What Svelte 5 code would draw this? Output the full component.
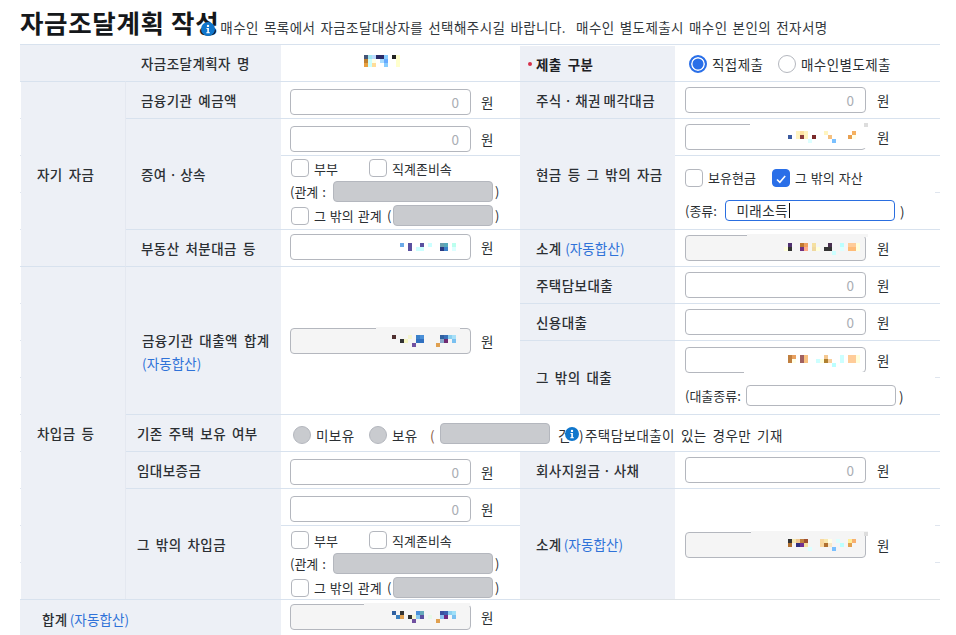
<script>
  function mk(ox, oy, cover, rows) {
    const cells = [];
    for (const [y, r] of rows) {
      for (let i = 0; i < r.length; i += 2) cells.push({ l: r[i] - ox, t: y - oy, c: r[i + 1] });
    }
    const c = cover ? { l: cover[0] - ox, t: cover[1] - oy, w: cover[2], h: cover[3], c: cover[4] } : null;
    return { cover: c, cells };
  }
  const name = mk(364, 55, null, [
    [55, [364,'#445577',368,'#a0e4f0',372,'#bcdcff',376,'#2a2a66',380,'#2a2a66',384,'#88ccff',392,'#222222',396,'#ffffcc']],
    [59, [364,'#c08030',368,'#ccffff',372,'#ffffe8',380,'#aaddff',384,'#66aaff',396,'#ffffcc']],
    [63, [364,'#e8a040',368,'#ccffff',372,'#ffdd99',384,'#88ccff',396,'#ffffcc']]
  ]);
  const stock = mk(685, 124, [750, 122, 118, 26, '#fff'], [
    [123, [864,'#dddddd']],
    [131, [796,'#fff3c0',800,'#fde0a0',804,'#fff3c0',824,'#fff5c0',852,'#f5b060']],
    [135, [788,'#3a5aa0',796,'#fff3c0',800,'#8a3a3a',804,'#fff3c0',812,'#7a2a2a',828,'#f5c080',848,'#e8a050',852,'#ffffe8']],
    [139, [808,'#ddffff',832,'#7ac0ff']]
  ]);
  const land = mk(290, 234, null, [
    [243, [400,'#6aaae8',408,'#5a50a0',420,'#5a50a0',428,'#ccffff',440,'#6aa0b0',444,'#55aabb',452,'#bbffee']],
    [247, [408,'#5a50a0',416,'#ccffff',420,'#ccffff',440,'#2a3a80',444,'#3a80c8',452,'#ddffff']]
  ]);
  const loan = mk(290, 328, [376, 327, 84, 3, '#f5f5f5'], [
    [335, [392,'#503030',408,'#f5f5d0',416,'#3a80c8',420,'#4a90d8',440,'#3060a0',444,'#3a70b8',448,'#8ad0f0',452,'#a8e0f8']],
    [339, [400,'#333333',404,'#f5f5c0',416,'#3070c0',420,'#3070c0',440,'#88aacc',444,'#702a70',452,'#7ac0f0']],
    [343, [412,'#7050a0',436,'#e0a050']]
  ]);
  const total = mk(290, 604, [364, 603, 106, 3, '#f5f5f5'], [
    [611, [392,'#3060a0',400,'#333333',416,'#4a90d8',420,'#66aabb',440,'#3a50a0',444,'#3a60b0',448,'#8ad0f0',452,'#a0e0f8']],
    [615, [396,'#3a80c0',400,'#e0a050',408,'#333333',412,'#f5f5d0',416,'#8ac8f0',420,'#5a50a0',428,'#e8f8e8',440,'#8ac0f0',444,'#702a80',452,'#7ac0f0']],
    [619, [412,'#7050a0',436,'#e0a050']]
  ]);
  const sub1 = mk(685, 235, [747, 234, 121, 3, '#f5f5f5'], [
    [243, [788,'#503070',800,'#c07830',804,'#f0a060',812,'#f5e0a0',828,'#4a3050',840,'#bbffff',848,'#ffcc99',852,'#ffcc99',856,'#ffffdd']],
    [247, [784,'#ffffdd',788,'#333333',800,'#703080',804,'#ffaa88',812,'#f0d8a0',816,'#ffffdd',824,'#333333',828,'#333333',840,'#ddffff',848,'#ffbb77',852,'#ffbb77',856,'#ffffdd']],
    [251, [832,'#ccffff']]
  ]);
  const other = mk(685, 347, [744, 372, 121, 3, '#fff'], [
    [355, [788,'#c08040',792,'#e8a060',800,'#a06060',804,'#f8c080',824,'#f5c890',840,'#ccffff',848,'#ffcc99',852,'#ffcc99',856,'#ffffdd']],
    [359, [788,'#c08040',792,'#ffffe8',800,'#a06060',804,'#f8c080',816,'#ccffff',820,'#ffffdd',824,'#b08030',828,'#f8d0a0',840,'#ccffff',848,'#ffcc99',852,'#ffcc99',856,'#ffffdd']],
    [363, [832,'#bbffff']]
  ]);
  const sub2 = mk(685, 532, [751, 531, 117, 3, '#f5f5f5'], [
    [532, [864,'#dddddd']],
    [539, [788,'#333333',792,'#f5e8b0',796,'#f0c890',800,'#c08040',804,'#a05030',820,'#f8d8a0',824,'#f8e8b0',828,'#ffffe8',836,'#ddffff',848,'#ffee99',852,'#f8b070']],
    [543, [788,'#b07030',796,'#303080',800,'#703090',804,'#f5e0a0',820,'#f8d8a0',824,'#b07030',828,'#f8e8c8',840,'#bbffff',848,'#e0a050']],
    [547, [808,'#ddffff',832,'#7ac0ff']]
  ]);
</script>

{#snippet mosaic(m)}
  {#if m.cover}
    <i class="cover" style="left:{m.cover.l}px;top:{m.cover.t}px;width:{m.cover.w}px;height:{m.cover.h}px;background:{m.cover.c}"></i>
  {/if}
  {#each m.cells as b}
    <i class="px" style="left:{b.l}px;top:{b.t}px;background:{b.c}"></i>
  {/each}
{/snippet}

{#snippet field(m, ro)}
  <div class="fld" class:ro>
    {#if m}{@render mosaic(m)}{:else}<span class="zero">0</span>{/if}
  </div>
  <span class="won">원</span>
{/snippet}

{#snippet info()}
  <svg class="info" viewBox="0 0 14 14" width="14" height="14" aria-hidden="true">
    <circle cx="7" cy="7" r="7" fill="#0f76cc" />
    <circle cx="7" cy="3.9" r="1.2" fill="#fff" />
    <path d="M5.5 6h2.4v4.2h1V11.2H5.3v-1h1V7H5.5z" fill="#fff" />
  </svg>
{/snippet}

{#snippet rel(pad)}
  <div class="rows" class:pad>
    <div class="line chk plain">
      <span class="box"></span><span class="l1">부부</span>
      <span class="box"></span><span>직계존비속</span>
    </div>
    <div class="line plain">
      <span class="rl">(관계 :</span><span class="gray g160"></span><span class="cp">)</span>
    </div>
    <div class="line plain">
      <span class="box b0"></span><span class="ol">그 밖의 관계</span><span class="op">(</span><span class="gray g100"></span><span class="cp">)</span>
    </div>
  </div>
{/snippet}

<div class="page">
  <header class="head">
    <h1>자금조달계획 작성</h1>
    {@render info()}
    <p>매수인 목록에서 자금조달대상자를 선택해주시길 바랍니다.&nbsp; 매수인 별도제출시 매수인 본인의 전자서명</p>
  </header>

  <div class="table">
    <div class="c lab first" style="grid-area:1/1/2/3">자금조달계획자 명</div>
    <div class="c val" style="grid-area:1/3/2/4"><div class="name">{@render mosaic(name)}</div></div>
    <div class="c lab rl-lab strong" style="grid-area:1/4/2/5"><i class="dot"></i>제출 구분</div>
    <div class="c val radios" style="grid-area:1/5/2/6">
      <span class="radio on"></span><span class="r1">직접제출</span>
      <span class="radio"></span><span>매수인별도제출</span>
    </div>

    <div class="c a" style="grid-area:2/1/7/2">자기 자금</div>
    <div class="c lab" style="grid-area:2/2/3/3">금융기관 예금액</div>
    <div class="c val low" style="grid-area:2/3/3/4">{@render field()}</div>
    <div class="c lab rl-lab tight" style="grid-area:2/4/3/5">주식 · 채권 매각대금</div>
    <div class="c val rv" style="grid-area:2/5/3/6">{@render field()}</div>

    <div class="c lab tight" style="grid-area:3/2/6/3">증여 · 상속</div>
    <div class="c val low" style="grid-area:3/3/4/4">{@render field()}</div>
    <div class="c val top" style="grid-area:4/3/6/4">{@render rel(false)}</div>
    <div class="c lab rl-lab" style="grid-area:3/4/6/5">현금 등 그 밖의 자금</div>
    <div class="c val rv" style="grid-area:3/5/4/6">{@render field(stock)}</div>
    <div class="c val rv top tick1 cash" style="grid-area:4/5/6/6">
      <div class="line plain">
        <span class="box"></span><span class="l2">보유현금</span>
        <span class="box checked">
          <svg viewBox="0 0 18 18" width="18" height="18" aria-hidden="true"><path d="M4.5 9.5l3.2 3.2 6-7" fill="none" stroke="#fff" stroke-width="1.8" /></svg>
        </span><span>그 밖의 자산</span>
      </div>
      <div class="line kind">
        <span class="kl plain">(종류:</span><span class="typed">미래소득<i class="caret"></i></span><span class="kr">)</span>
      </div>
    </div>

    <div class="c lab" style="grid-area:6/2/7/3">부동산 처분대금 등</div>
    <div class="c val up" style="grid-area:6/3/7/4">{@render field(land)}</div>
    <div class="c lab rl-lab nosp" style="grid-area:6/4/7/5"><span>소계 <span class="auto">(자동합산)</span></span></div>
    <div class="c val rv" style="grid-area:6/5/7/6">{@render field(sub1, true)}</div>

    <div class="c a" style="grid-area:7/1/16/2">차입금 등</div>
    <div class="c lab loan" style="grid-area:7/2/11/3">
      <div>금융기관 대출액 합계<br /><span class="auto">(자동합산)</span></div>
    </div>
    <div class="c val" style="grid-area:7/3/11/4">{@render field(loan, true)}</div>
    <div class="c lab rl-lab" style="grid-area:7/4/8/5">주택담보대출</div>
    <div class="c val rv" style="grid-area:7/5/8/6">{@render field()}</div>
    <div class="c lab rl-lab" style="grid-area:8/4/9/5">신용대출</div>
    <div class="c val rv" style="grid-area:8/5/9/6">{@render field()}</div>
    <div class="c lab rl-lab" style="grid-area:9/4/11/5">그 밖의 대출</div>
    <div class="c val rv top tick1 loanrow" style="grid-area:9/5/11/6">
      <div class="line">{@render field(other)}</div>
      <div class="line">
        <span class="ll plain">(대출종류:</span><span class="blank"></span><span class="kr2">)</span>
      </div>
    </div>

    <div class="c lab in" style="grid-area:11/2/12/3">기존 주택 보유 여부</div>
    <div class="c val own" style="grid-area:11/3/12/6">
      <span class="radio off"></span><span class="o1">미보유</span>
      <span class="radio off"></span><span class="o2">보유</span>
      <span class="bracket">(</span>
      <span class="gray g110"></span>
      <span class="cnt">건</span>
      {@render info()}
      <span class="cp2">)</span>
      <span class="note">주택담보대출이 있는 경우만 기재</span>
    </div>

    <div class="c lab in" style="grid-area:12/2/13/3">임대보증금</div>
    <div class="c val low" style="grid-area:12/3/13/4">{@render field()}</div>
    <div class="c lab rl-lab tight" style="grid-area:12/4/13/5">회사지원금 · 사채</div>
    <div class="c val rv" style="grid-area:12/5/13/6">{@render field()}</div>

    <div class="c lab in" style="grid-area:13/2/16/3">그 밖의 차입금</div>
    <div class="c val low" style="grid-area:13/3/14/4">{@render field()}</div>
    <div class="c val top" style="grid-area:14/3/16/4">{@render rel(true)}</div>
    <div class="c lab rl-lab" style="grid-area:13/4/16/5"><span>소계<span class="auto gap">(자동합산)</span></span></div>
    <div class="c val rv tick2" style="grid-area:13/5/16/6">{@render field(sub2, true)}</div>

    <div class="c lab sum" style="grid-area:16/1/17/3"><span>합계<span class="auto gap">(자동합산)</span></span></div>
    <div class="c val up" style="grid-area:16/3/17/4">{@render field(total, true)}</div>
    <div class="c blankcell" style="grid-area:16/4/17/6"></div>
  </div>
</div>

<style>
  :global(html), :global(body) { margin: 0; overflow: hidden; background: #fff; }
  .page {
    width: 956px;
    height: 635px;
    overflow: hidden;
    font-family: "Noto Sans CJK KR", "Noto Sans", sans-serif;
    font-size: 13.5px;
    color: #2b2f33;
    letter-spacing: 0.43px;
    word-spacing: 2.5px;
  }
  .head { height: 44px; padding-left: 20px; display: flex; align-items: flex-start; box-sizing: border-box; position: relative; }
  h1 { margin: 4px 0 0; font-size: 25.5px; line-height: 36px; font-weight: 700; color: #15181b; letter-spacing: 0.65px; word-spacing: 0; }
  .head .info { margin: 22px 0 0 -18px; position: relative; flex: none; }
  .head p { margin: 17px 0 0 5px; line-height: 20px; white-space: nowrap; color: #33383d; word-spacing: 1.6px; }

  .table {
    width: 920px;
    margin-left: 20px;
    display: grid;
    grid-template-columns: 106px 155px 239px 155px 265px;
    grid-template-rows: repeat(16, 37px);
  }
  .c {
    box-sizing: border-box;
    border-top: 1px solid #d8e2ee;
    display: flex;
    align-items: center;
    min-width: 0;
    white-space: nowrap;
  }
  .a {
    padding-left: 17px;
    padding-bottom: 1px;
    font-weight: 500;
    border-top-color: #d8e2ee;
    border-right: 1px solid #e4e8f0;
    background:
      linear-gradient(#edf0f6, #edf0f6) 1px 0 / 100% 100% no-repeat,
      repeating-linear-gradient(#fff 0 36px, #dfe5ee 36px 37px);
  }
  .lab { background: #edf0f6; padding-left: 15px; padding-bottom: 1px; font-weight: 500; }
  .first { padding-left: 121px; }
  .rl-lab { padding-left: 16px; }
  .tight { word-spacing: -0.8px; }
  .nosp { word-spacing: 0; }
  .strong { font-weight: 700; position: relative; padding-top: 2px; padding-bottom: 0; background: linear-gradient(#fff 1px, #edf0f6 1px); color: #1d2024; }
  .dot { position: absolute; left: 8px; top: 17px; width: 4px; height: 4px; border-radius: 50%; background: #d6304a; }
  .in { padding-left: 11px; }
  .loan { padding-left: 16px; padding-top: 23px; line-height: 23px; }
  .sum { padding-left: 22px; padding-top: 2px; padding-bottom: 1px; }
  .auto { color: #2f72d8; font-weight: 400; letter-spacing: 0.1px; }
  .gap { margin-left: 2px; }
  .plain { font-size: 13px; letter-spacing: 0; word-spacing: 1px; }
  .val { padding-left: 9px; background: #fff; }
  .rv { padding-left: 10px; }
  .low { padding-top: 4px; }
  .up { padding-bottom: 2px; }
  .top { align-items: flex-start; }
  .tick1 { background: linear-gradient(#dfe5ee, #dfe5ee) right 36px / 5px 1px no-repeat #fff; }
  .tick2 {
    padding-top: 2px;
    background:
      linear-gradient(#dfe5ee, #dfe5ee) right 36px / 5px 1px no-repeat,
      linear-gradient(#dfe5ee, #dfe5ee) right 73px / 5px 1px no-repeat,
      #fff;
  }
  .blankcell { background: #fff; border-top-color: #dfe3e6; }

  .fld {
    position: relative;
    width: 181px;
    height: 26px;
    box-sizing: border-box;
    border: 1px solid #b4b7be;
    border-radius: 4px;
    background: #fff;
    text-align: right;
    flex: none;
  }
  .fld.ro { background: #f5f5f5; }
  .zero { display: block; padding-right: 11px; line-height: 24px; color: #a9adb3; letter-spacing: 0; }
  .won { margin-left: 10px; letter-spacing: 0; }
  .rv .won { margin-left: 11px; }
  .cover { position: absolute; display: block; margin: -1px 0 0 -1px; }
  .px { position: absolute; display: block; width: 4px; height: 4px; margin: -1px 0 0 -1px; }
  .name { position: relative; width: 36px; height: 12px; margin: 0 0 4px 74px; }
  .name .px { margin: 0; }

  .rows { display: flex; flex-direction: column; gap: 3px; padding-top: 3px; }
  .rows.pad { padding-top: 5px; }
  .line { display: flex; align-items: center; }
  .rows .line { height: 21px; }
  .rows .chk { height: 18px; margin-bottom: 1px; margin-left: 1px; }
  .box {
    width: 18px;
    height: 18px;
    box-sizing: border-box;
    border: 1px solid #b4b7be;
    border-radius: 4px;
    background: #fff;
    flex: none;
    margin-right: 5px;
  }
  .b0 { margin-left: 1px; }
  .checked { background: #2a6fe8; border-color: #2a6fe8; display: flex; }
  .l1 { width: 55px; }
  .rl { width: 43px; }
  .ol { width: 73px; }
  .op { width: 6px; }
  .cp { margin-left: 2px; }
  .gray {
    display: block;
    box-sizing: border-box;
    height: 21px;
    border: 1px solid #b4b7be;
    border-radius: 4px;
    background: #c9cbcf;
    flex: none;
  }
  .g160 { width: 160px; }
  .g100 { width: 100px; }
  .g110 { width: 110px; }

  .radios { padding-left: 14px; padding-top: 2px; }
  .radio {
    width: 18px;
    height: 18px;
    box-sizing: border-box;
    border: 1px solid #b4b7be;
    border-radius: 50%;
    background: #fff;
    flex: none;
    margin-right: 5px;
  }
  .radio.on { border: 2px solid #2a6fe8; box-shadow: inset 0 0 0 1.5px #fff; background: #2a6fe8; }
  .radio.off { background: #c9cbcf; }
  .r1 { width: 66px; }

  .cash { flex-direction: column; padding-top: 12px; gap: 13px; }
  .l2 { width: 64px; }
  .kind { height: 21px; }
  .kl { width: 40px; }
  .typed {
    position: relative;
    width: 170px;
    height: 21px;
    box-sizing: border-box;
    border: 1.5px solid #2a6ee0;
    border-radius: 4px;
    padding-left: 10.5px;
    line-height: 18px;
    flex: none;
  }
  .caret { position: absolute; top: 2px; left: 63px; width: 1px; height: 15px; background: #111; }
  .kr { margin-left: 5px; }
  .loanrow { flex-direction: column; padding-top: 6px; gap: 12px; }
  .ll { width: 61px; }
  .blank {
    display: block;
    width: 150px;
    height: 21px;
    box-sizing: border-box;
    border: 1px solid #b4b7be;
    border-radius: 4px;
    flex: none;
  }
  .kr2 { margin-left: 3px; }

  .own { padding-left: 12px; }
  .own .radio, .o1, .o2, .bracket, .cnt, .cp2, .note { margin-top: 4px; }
  .o1 { width: 53px; }
  .o2 { width: 38px; }
  .bracket { width: 10px; color: #8a5a44; }
  .cnt { margin-left: 8px; width: 7px; }
  .own .info { flex: none; position: relative; margin-top: 2px; }
  .note { margin-left: 1px; }
</style>
